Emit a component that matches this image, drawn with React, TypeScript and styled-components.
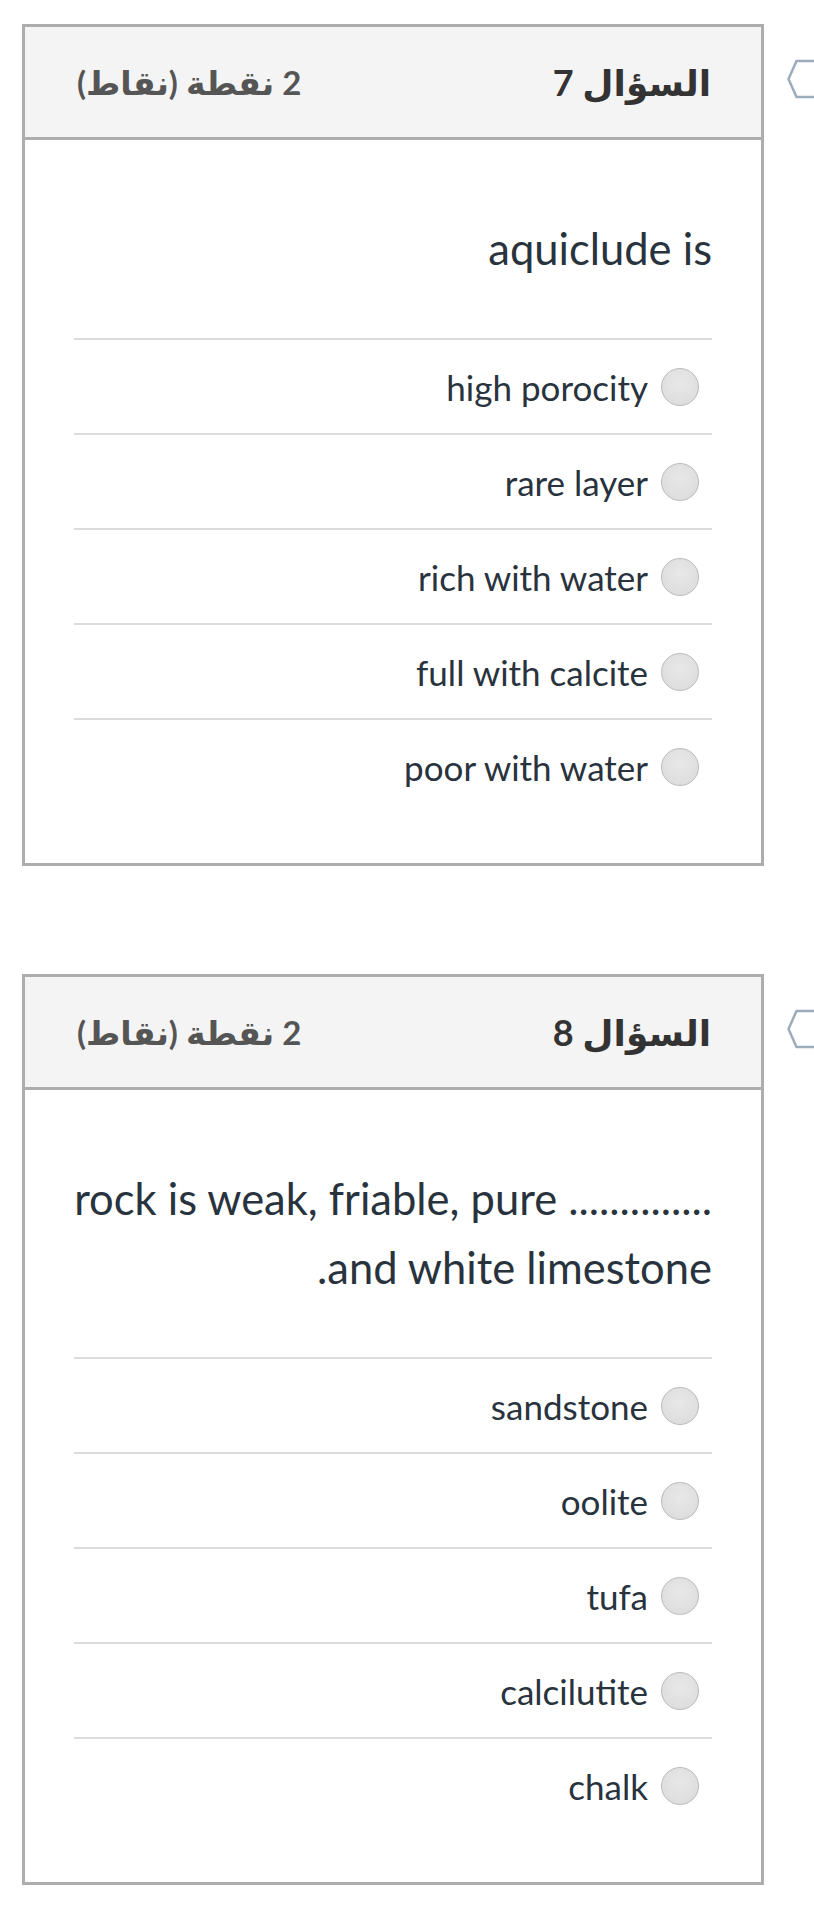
import React from 'react';
import styled, { createGlobalStyle } from 'styled-components';

interface IQuestion {
    number: number
    points: string
    text: React.ReactNode
    options: string[]
}

// keeps the english part of a line left-to-right inside the rtl page
const Latin = styled.span`
    direction: ltr;
    unicode-bidi: isolate;
`

const questions: IQuestion[] = [
    {
        number: 7,
        points: '2 نقطة (نقاط)',
        text: 'aquiclude is',
        options: ['high porocity', 'rare layer', 'rich with water', 'full with calcite', 'poor with water'],
    },
    {
        number: 8,
        points: '2 نقطة (نقاط)',
        text: <><Latin>rock is weak, friable, pure ..............</Latin><br />and white limestone.</>,
        options: ['sandstone', 'oolite', 'tufa', 'calcilutite', 'chalk'],
    },
]

const App = () => {
    return (
        <Page dir="rtl">
            <GlobalStyle />
            {questions.map((question) =>
                <QuestionRow key={question.number}>
                    <Flag viewBox="0 0 27 40">
                        <path d="M28 2 H9.5 L1.5 20 L9.5 38 H28" />
                    </Flag>
                    <Card>
                        <CardHeader>
                            <QuestionTitle>السؤال {question.number}</QuestionTitle>
                            <Points>{question.points}</Points>
                        </CardHeader>
                        <CardBody>
                            <QuestionText>{question.text}</QuestionText>
                            {question.options.map((option) =>
                                <Option key={option}>
                                    <Radio />
                                    <OptionLabel>{option}</OptionLabel>
                                </Option>
                            )}
                        </CardBody>
                    </Card>
                </QuestionRow>
            )}
        </Page>
    )
}

const GlobalStyle = createGlobalStyle`
    body {
        margin: 0;
        background: #fff;
        font-family: Lato, "DejaVu Sans", sans-serif;
    }
`

const Page = styled.div`
    display: flex;
    flex-direction: column;
    gap: 108px;
    padding: 24px 0 40px;
    width: 814px;
    overflow: hidden;
`

const QuestionRow = styled.div`
    display: flex;
    align-items: flex-start;
    gap: 23px;
`

const Flag = styled.svg`
    width: 27px;
    height: 40px;
    margin-top: 35px;
    flex-shrink: 0;

    path {
        fill: none;
        stroke: #9cacba;
        stroke-width: 2.5;
        stroke-linejoin: round;
    }
`

const Card = styled.div`
    width: 742px;
    box-sizing: border-box;
    border: 3px solid #adadad;
    background: #fff;
`

const CardHeader = styled.div`
    display: flex;
    justify-content: space-between;
    align-items: center;
    height: 110px;
    padding: 0 50px 0 52px;
    background: #f4f4f4;
    border-bottom: 3px solid #adadad;
    font-family: Lato, "DejaVu Sans", sans-serif;
    font-weight: 700;
`

const QuestionTitle = styled.h3`
    margin: 0;
    font-size: 36px;
    color: #333;
`

const Points = styled.div`
    font-size: 33px;
    color: #555;
`

const CardBody = styled.div`
    padding: 73.5px 49px 50px;
`

const QuestionText = styled.p`
    margin: 0 0 55.5px;
    font-size: 43.5px;
    line-height: 69px;
    color: #29333d;
`

const Option = styled.label`
    display: flex;
    align-items: center;
    gap: 13px;
    height: 95px;
    box-sizing: border-box;
    padding-right: 13px;
    border-top: 2px solid #dcdcdc;
`

const Radio = styled.span`
    width: 38px;
    height: 38px;
    box-sizing: border-box;
    border-radius: 50%;
    border: 1.5px solid #bababa;
    background: radial-gradient(circle at 50% 40%, #e8e8e8, #dadada);
    flex-shrink: 0;
`

const OptionLabel = styled.span`
    font-size: 35px;
    color: #29333d;
`

export default App
